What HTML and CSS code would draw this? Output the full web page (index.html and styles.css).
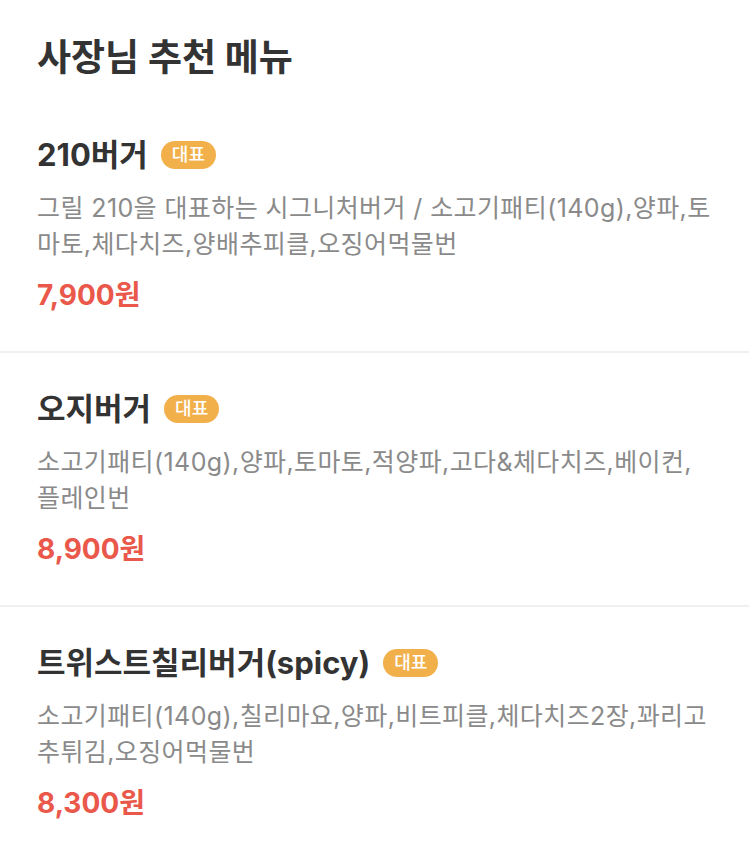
FILE: index.html
```html
<!DOCTYPE html>
<html lang="ko">

<head>
  <meta charset="UTF-8">
  <meta name="viewport" content="width=device-width, initial-scale=1.0">
  <title>사장님 추천 메뉴</title>
  <link rel="stylesheet" href="styles.css">
</head>

<body>

  <div class="recommend">

    <!-- 제목 -->
    <h2 class="recommend-title">사장님 추천 메뉴</h2>

    <!-- 메뉴 목록 -->
    <ul class="menu-list">
      <li class="menu-item">
        <div class="menu-name">
          <span>210버거</span>
          <em class="badge">대표</em>
        </div>
        <p class="menu-desc">그릴 210을 대표하는 시그니처버거 / 소고기패티(140g),양파,토마토,체다치즈,양배추피클,오징어먹물번</p>
        <p class="menu-price">7,900원</p>
      </li>
      <li class="menu-item">
        <div class="menu-name">
          <span>오지버거</span>
          <em class="badge">대표</em>
        </div>
        <p class="menu-desc">소고기패티(140g),양파,토마토,적양파,고다&amp;체다치즈,베이컨,플레인번</p>
        <p class="menu-price">8,900원</p>
      </li>
      <li class="menu-item">
        <div class="menu-name">
          <span>트위스트칠리버거(spicy)</span>
          <em class="badge">대표</em>
        </div>
        <p class="menu-desc">소고기패티(140g),칠리마요,양파,비트피클,체다치즈2장,꽈리고추튀김,오징어먹물번</p>
        <p class="menu-price">8,300원</p>
      </li>
    </ul>

  </div>

</body>

</html>
```

FILE: styles.css
```css
* {
  margin: 0;
  padding: 0;
}

body {
  background-color: #fff;
  font-family: Inter, "Noto Sans CJK KR", sans-serif;
  color: #333;
}

/* 제목 */
.recommend-title {
  padding: 33px 37px 16px;
  font-size: 37px;
  line-height: 50px;
  font-weight: 700;
  color: #333;
}

.menu-list {
  list-style: none;
}

/* 메뉴 한 줄 */
.menu-item {
  padding: 34px 37px 36px;
  border-bottom: 2px solid #f0f0f0;
}

.menu-item:last-child {
  border-bottom: 0;
}

.menu-name {
  display: flex;
  align-items: center;
  gap: 13px;
  font-size: 31px;
  line-height: 44px;
  font-weight: 700;
  color: #333;
}

/* 대표 뱃지 */
.badge {
  font-style: normal;
  font-size: 18px;
  font-weight: 500;
  line-height: 28px;
  height: 28px;
  padding: 0 11px;
  border-radius: 14px;
  background-color: #f2b04b;
  color: #fff;
}

.menu-desc {
  margin-top: 13px;
  font-size: 25px;
  line-height: 36px;
  letter-spacing: 0.4px;
  color: #8a8a8a;
}

.menu-price {
  margin-top: 13px;
  font-size: 28px;
  line-height: 40px;
  font-weight: 700;
  color: #e9584a;
}
```
